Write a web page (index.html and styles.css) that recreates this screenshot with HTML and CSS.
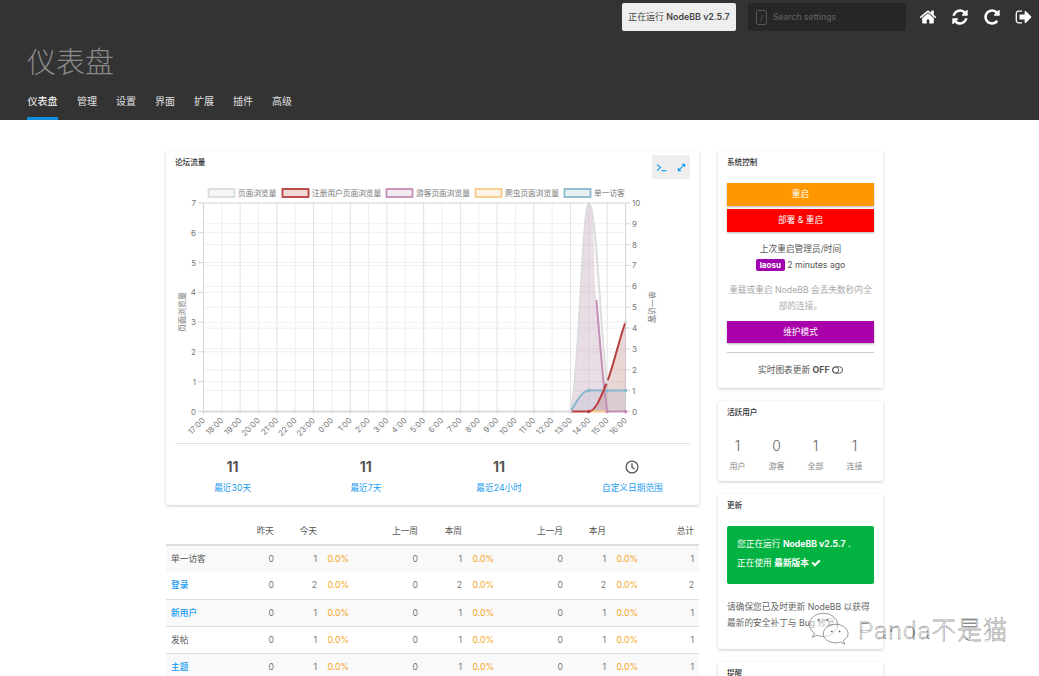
FILE: index.html
```html
<!DOCTYPE html>
<html lang="zh">
<head>
<meta charset="utf-8">
<title>仪表盘</title>
<link rel="stylesheet" href="styles.css">
</head>
<body>
<header class="header">
  <div class="topbar">
    <div class="version">正在运行 <b>NodeBB v2.5.7</b></div>
    <div class="search">
      <span class="key">/</span>
      <span class="search-text">Search settings</span>
    </div>
    <div class="actions">
      <svg class="fa" viewBox="0 0 1792 1792"><path d="M1472 992v480q0 26-19 45t-45 19h-384v-384h-256v384h-384q-26 0-45-19t-19-45v-480q0-1 .5-3t.5-3l575-474 575 474q1 2 1 6zm223-69l-62 74q-8 9-21 11h-3q-13 0-21-7l-692-577-692 577q-12 8-24 7-13-2-21-11l-62-74q-8-10-7-23.5t11-21.5l719-599q32-26 76-26t76 26l244 204v-195q0-14 9-23t23-9h192q14 0 23 9t9 23v408l219 182q10 8 11 21.500t-7 23.500z"/></svg>
      <svg class="fa" viewBox="0 0 1792 1792"><path d="M1639 1056q0 5-1 7-64 268-268 434.500t-478 166.500q-146 0-282.500-55t-243.500-157l-129 129q-19 19-45 19t-45-19-19-45v-448q0-26 19-45t45-19h448q26 0 45 19t19 45-19 45l-137 137q71 66 161 102t187 36q134 0 250-65t186-179q11-17 53-117 8-23 30-23h192q13 0 22.500 9.500t9.500 22.500zm25-800v448q0 26-19 45t-45 19h-448q-26 0-45-19t-19-45 19-45l138-138q-148-137-349-137-134 0-250 65t-186 179q-11 17-53 117-8 23-30 23h-199q-13 0-22.500-9.500t-9.500-22.500v-7q65-268 270-434.500t480-166.500q146 0 284 55.500t245 156.500l130-129q19-19 45-19t45 19 19 45z"/></svg>
      <svg class="fa" viewBox="0 0 1792 1792"><path d="M1664 256v448q0 26-19 45t-45 19h-448q-42 0-59-40-17-39 14-69l138-138q-148-137-349-137-104 0-198.500 40.500t-163.500 109.500-109.500 163.500-40.500 198.500 40.500 198.500 109.500 163.500 163.500 109.500 198.500 40.500q119 0 225-52t179-147q7-10 23-12 15 0 25 9l137 138q9 8 9.500 20.500t-7.500 22.500q-109 132-264 204.500t-327 72.500q-156 0-298-61t-245-164-164-245-61-298 61-298 164-245 245-164 298-61q147 0 284.500 55.500t244.500 156.500l130-129q29-31 70-14 39 17 39 59z"/></svg>
      <svg class="fa" viewBox="0 0 1792 1792"><path d="M704 1440q0 4 1 20t.5 26.500-3 23.500-10 19.500-20.500 6.500h-320q-119 0-203.500-84.500t-84.500-203.500v-704q0-119 84.500-203.500t203.500-84.500h320q13 0 22.500 9.500t9.500 22.500q0 4 1 20t.5 26.500-3 23.500-10 19.500-20.500 6.500h-320q-66 0-113 47t-47 113v704q0 66 47 113t113 47h312l11.500 1 11.500 3 8 5.500 7 9 2 13.500zm928-544q0 26-19 45l-544 544q-19 19-45 19t-45-19-19-45v-288h-448q-26 0-45-19t-19-45v-384q0-26 19-45t45-19h448v-288q0-26 19-45t45-19 45 19l544 544q19 19 19 45z"/></svg>
    </div>
  </div>
  <h1 class="page-title">仪表盘</h1>
  <nav class="nav">
    <a class="nav-item active">仪表盘</a>
    <a class="nav-item">管理</a>
    <a class="nav-item">设置</a>
    <a class="nav-item">界面</a>
    <a class="nav-item">扩展</a>
    <a class="nav-item">插件</a>
    <a class="nav-item">高级</a>
  </nav>
</header>

<main class="main">
  <section class="left">
    <div class="card chart-card">
      <div class="chart-head">
        <div class="card-title chart-title">论坛流量</div>
        <div class="tools">
          <svg class="tool" viewBox="0 0 12 10"><path d="M1 1.500 L5 5 L1 8.500 M6 8.500 H11.500"/></svg>
          <svg class="tool" viewBox="0 0 10 10"><path d="M2 8 L8 2 M5.500 1.500 H8.500 V4.500 M1.500 5.500 V8.500 H4.500"/></svg>
        </div>
      </div>
      <svg class="chart" viewBox="166 179 533 264" width="533" height="264">
        <g class="legend">
          <rect x="208.500" y="189" width="26" height="8" fill="#f6f6f6" stroke="#dcdcdc" stroke-width="1.800"/>
          <text x="238" y="196">页面浏览量</text>
          <rect x="282.500" y="189" width="26" height="8" fill="#f2d9d8" stroke="#b93f3f" stroke-width="1.800"/>
          <text x="312" y="196">注册用户页面浏览量</text>
          <rect x="386.500" y="189" width="26" height="8" fill="#f3ebf2" stroke="#c48fb6" stroke-width="1.800"/>
          <text x="416" y="196">游客页面浏览量</text>
          <rect x="475.500" y="189" width="26" height="8" fill="#fdf3e6" stroke="#f7ca88" stroke-width="1.800"/>
          <text x="505" y="196">爬虫页面浏览量</text>
          <rect x="564.500" y="189" width="26" height="8" fill="#e8f0f4" stroke="#8ab8cc" stroke-width="1.800"/>
          <text x="594" y="196">单一访客</text>
        </g>
        <path class="grid-soft" d="M203.500 381.700H625.500M203.500 351.900H625.500M203.500 322.100H625.500M203.500 292.300H625.500M203.500 262.500H625.500M203.500 232.700H625.500M203.500 369.800H625.500M203.500 348.900H625.500M203.500 328.100H625.500M203.500 307.200H625.500M203.500 286.400H625.500M203.500 265.500H625.500M203.500 244.700H625.500M203.500 223.800H625.500M203.500 390.600H625.500"/>
        <path class="grid-soft" d="M221.800 203V414M258.500 203V414M295.200 203V414M331.900 203V414M368.600 203V414M405.300 203V414M442 203V414M478.700 203V414M515.400 203V414M552.100 203V414M588.800 203V414"/>
        <path class="grid-hard" d="M240.200 203V414M276.900 203V414M313.600 203V414M350.300 203V414M387 203V414M423.700 203V414M460.400 203V414M497.100 203V414M533.800 203V414M570.500 203V414M607.200 203V414"/>
        <path class="axis" d="M198 203H630M198 411.500H630M203.500 203V414M625.500 203V414M198 381.700H203.500M198 351.900H203.500M198 322.100H203.500M198 292.300H203.500M198 262.500H203.500M198 232.700H203.500M625.500 390.600H630M625.500 369.800H630M625.500 348.900H630M625.500 328.100H630M625.500 307.200H630M625.500 286.400H630M625.500 265.500H630M625.500 244.700H630M625.500 223.800H630"/>

        <path class="area-blue" d="M570.500 411.500C577 401 582 391 588.800 390.600C596 389.800 601 390.600 607.200 390.600L625.500 390.600V411.500Z"/>
        <path class="area-purple" d="M570.500 411.500C579 380 582 203 588.800 203C596 203 592 283 596.500 300C599 330 603 385 607.200 411.500H570.500Z"/>
        <path class="area-red" d="M588.800 411.500C595 411.500 600.200 399 607.200 382C614 364 619 340 625.500 322V411.500Z"/>
        <path class="area-gray" d="M570.500 411.500C579 380 582 203 588.800 203C597 203 601 350 607.200 382C614 364 619 340 625.500 322V411.500Z"/>

        <path class="line-gray" d="M203.500 411.500H570.500C579 380 582 203 588.800 203C597 203 601 350 607.200 382C614 364 619 340 625.500 322"/>
        <path class="line-yellow" d="M588.800 411.500H607.200"/>
        <path class="line-blue" d="M570.500 411.500C577 401 582 391 588.800 390.600C596 389.800 601 390.600 607.200 390.600L625.500 390.600"/>
        <path class="line-purple" d="M596.500 300C599 330 603 385 607.200 411.500H625.500"/>
        <path class="line-red" d="M570.500 411.500H588.800C595 411.500 600.200 399 607.200 382C614 364 619 340 625.500 322"/>

        <g class="dots-gray">
          <circle cx="203.500" cy="411.500" r="1.600"/><circle cx="221.800" cy="411.500" r="1.600"/><circle cx="240.200" cy="411.500" r="1.600"/><circle cx="258.500" cy="411.500" r="1.600"/><circle cx="276.900" cy="411.500" r="1.600"/><circle cx="295.200" cy="411.500" r="1.600"/><circle cx="313.600" cy="411.500" r="1.600"/><circle cx="331.900" cy="411.500" r="1.600"/><circle cx="350.300" cy="411.500" r="1.600"/><circle cx="368.600" cy="411.500" r="1.600"/><circle cx="387" cy="411.500" r="1.600"/><circle cx="405.300" cy="411.500" r="1.600"/><circle cx="423.700" cy="411.500" r="1.600"/><circle cx="442" cy="411.500" r="1.600"/><circle cx="460.400" cy="411.500" r="1.600"/><circle cx="478.700" cy="411.500" r="1.600"/><circle cx="497.100" cy="411.500" r="1.600"/><circle cx="515.400" cy="411.500" r="1.600"/><circle cx="533.800" cy="411.500" r="1.600"/><circle cx="552.100" cy="411.500" r="1.600"/><circle cx="570.500" cy="411.500" r="1.600"/><circle cx="588.800" cy="203" r="1.600"/><circle cx="607.200" cy="382" r="2"/><circle cx="625.500" cy="322" r="1.800"/>
        </g>
        <circle cx="588.800" cy="411.500" r="1.800" fill="#b93f3f"/>
        <circle cx="607.200" cy="411.500" r="1.800" fill="#c48fb6"/>
        <circle cx="625.500" cy="411.500" r="1.800" fill="#c48fb6"/>
        <circle cx="588.800" cy="390.600" r="1.800" fill="#8ab8cc"/>
        <circle cx="607.200" cy="390.600" r="1.800" fill="#8ab8cc"/>
        <circle cx="625.500" cy="390.600" r="1.800" fill="#8ab8cc"/>

        <g class="ticks">
          <text x="196" y="206" text-anchor="end">7</text>
          <text x="196" y="236" text-anchor="end">6</text>
          <text x="196" y="266" text-anchor="end">5</text>
          <text x="196" y="295" text-anchor="end">4</text>
          <text x="196" y="325" text-anchor="end">3</text>
          <text x="196" y="355" text-anchor="end">2</text>
          <text x="196" y="385" text-anchor="end">1</text>
          <text x="196" y="415" text-anchor="end">0</text>
          <text x="632" y="206">10</text>
          <text x="632" y="227">9</text>
          <text x="632" y="248">8</text>
          <text x="632" y="268">7</text>
          <text x="632" y="289">6</text>
          <text x="632" y="310">5</text>
          <text x="632" y="331">4</text>
          <text x="632" y="352">3</text>
          <text x="632" y="373">2</text>
          <text x="632" y="394">1</text>
          <text x="632" y="415">0</text>
          <text transform="translate(205.500 421) rotate(-45)" text-anchor="end">17:00</text>
          <text transform="translate(223.800 421) rotate(-45)" text-anchor="end">18:00</text>
          <text transform="translate(242.200 421) rotate(-45)" text-anchor="end">19:00</text>
          <text transform="translate(260.500 421) rotate(-45)" text-anchor="end">20:00</text>
          <text transform="translate(278.900 421) rotate(-45)" text-anchor="end">21:00</text>
          <text transform="translate(297.200 421) rotate(-45)" text-anchor="end">22:00</text>
          <text transform="translate(315.600 421) rotate(-45)" text-anchor="end">23:00</text>
          <text transform="translate(333.900 421) rotate(-45)" text-anchor="end">0:00</text>
          <text transform="translate(352.300 421) rotate(-45)" text-anchor="end">1:00</text>
          <text transform="translate(370.600 421) rotate(-45)" text-anchor="end">2:00</text>
          <text transform="translate(389 421) rotate(-45)" text-anchor="end">3:00</text>
          <text transform="translate(407.300 421) rotate(-45)" text-anchor="end">4:00</text>
          <text transform="translate(425.700 421) rotate(-45)" text-anchor="end">5:00</text>
          <text transform="translate(444 421) rotate(-45)" text-anchor="end">6:00</text>
          <text transform="translate(462.400 421) rotate(-45)" text-anchor="end">7:00</text>
          <text transform="translate(480.700 421) rotate(-45)" text-anchor="end">8:00</text>
          <text transform="translate(499.100 421) rotate(-45)" text-anchor="end">9:00</text>
          <text transform="translate(517.400 421) rotate(-45)" text-anchor="end">10:00</text>
          <text transform="translate(535.800 421) rotate(-45)" text-anchor="end">11:00</text>
          <text transform="translate(554.100 421) rotate(-45)" text-anchor="end">12:00</text>
          <text transform="translate(572.500 421) rotate(-45)" text-anchor="end">13:00</text>
          <text transform="translate(590.800 421) rotate(-45)" text-anchor="end">14:00</text>
          <text transform="translate(609.200 421) rotate(-45)" text-anchor="end">15:00</text>
          <text transform="translate(627.500 421) rotate(-45)" text-anchor="end">16:00</text>
          <text transform="translate(185 312) rotate(-90)" text-anchor="middle">页面浏览量</text>
          <text transform="translate(649 307) rotate(90)" text-anchor="middle">单一访客</text>
        </g>
      </svg>
      <div class="chart-stats">
        <div class="chart-stat"><div class="stat-num">11</div><a class="stat-link">最近30天</a></div>
        <div class="chart-stat"><div class="stat-num">11</div><a class="stat-link">最近7天</a></div>
        <div class="chart-stat"><div class="stat-num">11</div><a class="stat-link">最近24小时</a></div>
        <div class="chart-stat">
          <div class="stat-num"><svg class="clock" viewBox="0 0 14 14"><circle cx="7" cy="7" r="5.900"/><path d="M7 3.200V7.300L9.600 9"/></svg></div>
          <a class="stat-link">自定义日期范围</a>
        </div>
      </div>
    </div>

    <table class="stats-table">
      <colgroup>
        <col class="c-label"><col class="c-39"><col class="c-43"><col class="c-57"><col class="c-44"><col class="c-44"><col class="c-57"><col class="c-44"><col class="c-43"><col class="c-44"><col class="c-44">
      </colgroup>
      <thead>
        <tr><th></th><th>昨天</th><th>今天</th><th></th><th>上一周</th><th>本周</th><th></th><th>上一月</th><th>本月</th><th></th><th>总计</th></tr>
      </thead>
      <tbody>
        <tr class="odd"><td class="label">单一访客</td><td>0</td><td>1</td><td class="pct">0.0%</td><td>0</td><td>1</td><td class="pct">0.0%</td><td>0</td><td>1</td><td class="pct">0.0%</td><td>1</td></tr>
        <tr class="line"><td class="label link">登录</td><td>0</td><td>2</td><td class="pct">0.0%</td><td>0</td><td>2</td><td class="pct">0.0%</td><td>0</td><td>2</td><td class="pct">0.0%</td><td>2</td></tr>
        <tr class="odd line"><td class="label link">新用户</td><td>0</td><td>1</td><td class="pct">0.0%</td><td>0</td><td>1</td><td class="pct">0.0%</td><td>0</td><td>1</td><td class="pct">0.0%</td><td>1</td></tr>
        <tr class="line"><td class="label">发帖</td><td>0</td><td>1</td><td class="pct">0.0%</td><td>0</td><td>1</td><td class="pct">0.0%</td><td>0</td><td>1</td><td class="pct">0.0%</td><td>1</td></tr>
        <tr class="odd"><td class="label link">主题</td><td>0</td><td>1</td><td class="pct">0.0%</td><td>0</td><td>1</td><td class="pct">0.0%</td><td>0</td><td>1</td><td class="pct">0.0%</td><td>1</td></tr>
      </tbody>
    </table>
  </section>

  <aside class="right">
    <div class="card side-card control">
      <div class="card-title side-title">系统控制</div>
      <a class="btn btn-orange">重启</a>
      <a class="btn btn-red">部署 &amp; 重启</a>
      <div class="center-text first-line">上次重启管理员/时间</div>
      <div class="center-text"><span class="user-badge">laosu</span> 2 minutes ago</div>
      <p class="muted">重载或重启 NodeBB 会丢失数秒内全部的连接。</p>
      <a class="btn btn-purple">维护模式</a>
      <div class="rule"></div>
      <div class="center-text live">实时图表更新 <b>OFF</b> <svg class="toggle" viewBox="0 0 12 8"><rect x=".5" y=".5" width="11" height="7" rx="3.500"/><circle cx="4" cy="4" r="3.300"/></svg></div>
    </div>

    <div class="card side-card active-users">
      <div class="card-title side-title">活跃用户</div>
      <div class="user-grid">
        <div><div class="big">1</div><div class="small">用户</div></div>
        <div><div class="big">0</div><div class="small">游客</div></div>
        <div><div class="big">1</div><div class="small">全部</div></div>
        <div><div class="big">1</div><div class="small">连接</div></div>
      </div>
    </div>

    <div class="card side-card updates">
      <div class="card-title side-title">更新</div>
      <div class="green-box">
        <div>您正在运行 <b>NodeBB v2.5.7</b> .</div>
        <div>正在使用 <b>最新版本</b> <svg class="check" viewBox="0 0 1792 1792"><path d="M1671 566q0 40-28 68l-724 724-136 136q-28 28-68 28t-68-28l-136-136-362-362q-28-28-28-68t28-68l136-136q28-28 68-28t68 28l294 295 656-657q28-28 68-28t68 28l136 136q28 28 28 68z"/></svg></div>
      </div>
      <p class="update-note">请确保您已及时更新 NodeBB 以获得最新的安全补丁与 Bug 修复。</p>
    </div>

    <div class="card side-card">
      <div class="card-title side-title">提醒</div>
    </div>
  </aside>
</main>

<div class="watermark">
  <svg class="wechat" viewBox="0 0 44 36">
    <path d="M16 1C8 1 1.500 6 1.500 13C1.500 17 4 20 7 22L4.500 26L10 24C12 25 14 25.300 16 25.300C24 25.300 31 19.500 31 13C31 6 24 1 16 1Z"/>
    <path d="M29 12.500C22 12.500 16 17 16 22.500C16 28 22 32 29 32C31 32 32.500 31.700 34 31L38.500 33.500L37 29.500C40 27.500 42 25.500 42 22.500C42 17 36 12.500 29 12.500Z"/>
    <circle class="eye" cx="11" cy="8" r="1.100"/><circle class="eye" cx="20" cy="8" r="1.100"/><circle class="eye" cx="25" cy="20" r="1"/><circle class="eye" cx="33" cy="20" r="1"/>
  </svg>
  <span class="wm-text">Panda不是猫</span>
</div>
</body>
</html>
```
FILE: styles.css
```css
* { box-sizing: border-box; }
html, body { margin: 0; padding: 0; }
body {
  width: 1039px;
  height: 676px;
  overflow: hidden;
  position: relative;
  background: #fff;
  color: #555;
  font-family: Inter, "Noto Sans CJK SC", sans-serif;
  font-size: 8.7px;
  line-height: 16px;
}

/* header */
.header {
  height: 120px;
  background: #333;
  display: flex;
  flex-direction: column;
  padding: 3px 6px 0 27px;
}
.topbar { display: flex; justify-content: flex-end; align-items: stretch; height: 28px; }
.version {
  width: 114px;
  background: #eee;
  border-radius: 2px;
  color: #444;
  font-size: 8.9px;
  line-height: 28px;
  text-align: center;
  white-space: nowrap;
}
.version b { font-weight: 600; }
.search {
  width: 158px;
  margin-left: 12px;
  background: #262626;
  border-radius: 2px;
  display: flex;
  align-items: center;
  padding-left: 8px;
}
.key {
  width: 11px;
  height: 15px;
  border: 1px solid #555;
  border-radius: 2px;
  color: #666;
  font-size: 7px;
  line-height: 13px;
  text-align: center;
}
.search-text { margin-left: 6px; color: #5e5e5e; font-size: 8.5px; font-weight: 500; }
.actions { display: flex; align-items: center; gap: 14px; margin-left: 13px; }
.fa { width: 18px; height: 18px; fill: #fff; display: block; }
.page-title {
  margin: 17px 0 0;
  color: #8a8a8a;
  font-size: 29px;
  font-weight: 300;
  line-height: 30px;
}
.nav { margin-top: auto; display: flex; gap: 19px; }
.nav-item {
  color: #e0e0e0;
  font-size: 10px;
  line-height: 12px;
  padding: 4px 0 10px;
  border-bottom: 3px solid transparent;
}
.nav-item.active { width: 31px; text-align: center; color: #fff; border-bottom-color: #0d8fdf; }

/* layout */
.main { display: flex; gap: 19px; padding: 31px 0 0 166px; }
.left { width: 533px; flex: none; }
.right { width: 165px; flex: none; display: flex; flex-direction: column; gap: 13px; }
.card {
  background: #fff;
  border-radius: 2px;
  box-shadow: 0 1px 3px rgba(0, 0, 0, .22);
}
.card-title { color: #333; font-size: 7.6px; font-weight: 500; line-height: 14px; }
.chart-title { margin-top: 1px; }

/* chart card */
.chart-head { display: flex; justify-content: space-between; align-items: flex-start; height: 28px; padding: 4px 9px 0; }
.tools {
  width: 38px;
  height: 24px;
  background: #eee;
  display: flex;
  align-items: center;
  justify-content: center;
  gap: 9px;
}
.tool { width: 11px; height: 9px; fill: none; stroke: #1a9cf0; stroke-width: 1.300; }
.chart { display: block; }
.legend text, .ticks text { font-size: 7.7px; fill: #777; }
.ticks text { font-size: 8px; }
.grid-soft { fill: none; stroke: #efefef; stroke-width: 1; }
.grid-hard { fill: none; stroke: #e2e2e2; stroke-width: 1; }
.axis { fill: none; stroke: #d4d4d4; stroke-width: 1; }
.area-gray { fill: rgba(200, 200, 200, .1); }
.area-purple { fill: rgba(186, 139, 175, .28); }
.area-red { fill: rgba(171, 70, 66, .2); }
.area-blue { fill: rgba(124, 175, 194, .16); }
.line-gray { fill: none; stroke: #dcdcdc; stroke-width: 1.800; }
.line-red { fill: none; stroke: #b93f3f; stroke-width: 2; }
.line-purple { fill: none; stroke: #c48fb6; stroke-width: 2; }
.line-yellow { fill: none; stroke: #f7ca88; stroke-width: 2; }
.line-blue { fill: none; stroke: #8ab8cc; stroke-width: 2; }
.dots-gray circle { fill: #dcdcdc; }
.chart-stats {
  display: grid;
  grid-template-columns: repeat(4, 1fr);
  padding: 15px 0 0;
  position: relative;
  height: 62px;
}
.chart-stats::before {
  content: "";
  position: absolute;
  left: 9px;
  right: 9px;
  top: 0;
  border-top: 1px solid #e2e2e2;
}
.chart-stat { text-align: center; }
.stat-num { color: #555; font-size: 14px; font-weight: 700; line-height: 18px; height: 18px; display: flex; justify-content: center; align-items: center; }
.stat-link { display: block; margin-top: 6px; color: #1a9cf0; font-size: 8.7px; line-height: 12px; }
.clock { width: 14px; height: 14px; fill: none; stroke: #555; stroke-width: 1.300; }

/* table */
.stats-table {
  width: 533px;
  margin-top: 10px;
  border-collapse: collapse;
  table-layout: fixed;
  color: #777;
  font-size: 8.7px;
}
.c-label { width: 74px; }
.c-39 { width: 39px; }
.c-43 { width: 43px; }
.c-44 { width: 44px; }
.c-57 { width: 57px; }
.stats-table th {
  height: 30px;
  padding: 2px 5px 0;
  border-bottom: 2px solid #ddd;
  color: #555;
  font-weight: 400;
  text-align: right;
}
.stats-table td { height: 27px; padding: 0 5px; text-align: right; }
.stats-table .odd { background: #f9f9f9; }
.stats-table .line td { border-bottom: 1px solid #ddd; }
.stats-table .label { color: #555; text-align: left; white-space: nowrap; }
.stats-table .link { color: #1a9cf0; font-weight: 500; }
.stats-table .pct { color: #f6a623; text-align: left; padding-left: 5.500px; }

/* side cards */
.side-card { padding: 0 9px; }
.side-title { padding-top: 4.500px; height: 19px; line-height: 14px; }
.btn {
  display: block;
  color: #fff;
  text-align: center;
  line-height: 23px;
  height: 23px;
  box-shadow: 0 1px 2px rgba(0, 0, 0, .3);
}
.btn-orange { background: #ff9800; margin-top: 13px; }
.btn-red { background: #ff0000; margin-top: 3px; }
.btn-purple { background: #aa00aa; height: 22px; line-height: 22px; margin-top: 7px; }
.center-text { text-align: center; white-space: nowrap; color: #555; }
.first-line { margin-top: 9px; }
.user-badge {
  display: inline-block;
  background: #a100b0;
  color: #fff;
  font-size: 8px;
  font-weight: 700;
  line-height: 12px;
  padding: 0 4px;
  border-radius: 2px;
}
.muted { margin: 9px 0 0; color: #aaa; text-align: center; }
.rule { margin-top: 9px; border-top: 1px solid #ccc; }
.live { margin-top: 9px; padding-bottom: 10px; }
.toggle { width: 11px; height: 8px; fill: none; stroke: #555; stroke-width: 1; vertical-align: -1px; }
.user-grid {
  display: grid;
  grid-template-columns: repeat(4, 39px);
  margin: 17px 0 0 -9px;
  padding-bottom: 9px;
  text-align: center;
}
.big { color: #666; font-size: 14px; font-weight: 300; line-height: 18px; }
.small { margin-top: 5px; color: #888; font-size: 8px; line-height: 12px; }
.green-box {
  margin-top: 13px;
  height: 58px;
  padding: 9px 10px;
  background: #03b342;
  border-radius: 2px;
  color: #fff;
  line-height: 19px;
  white-space: nowrap;
}
.check { width: 10px; height: 10px; fill: #fff; vertical-align: -1.500px; }
.update-note { margin: 15px 0 0; padding-bottom: 18px; color: #666; }

/* watermark overlay */
.watermark {
  position: absolute;
  left: 808px;
  top: 612px;
  display: flex;
  align-items: center;
  gap: 8px;
}
.wechat { width: 42px; height: 35px; fill: rgba(255, 255, 255, .55); stroke: #666; stroke-width: .7; }
.eye { fill: #666; stroke: none; }
.wm-text {
  margin-top: 3px;
  color: #fff;
  font-family: Roboto, "Noto Sans CJK SC", sans-serif;
  font-size: 24.6px;
  font-weight: 300;
  letter-spacing: 1px;
  line-height: 30px;
  white-space: nowrap;
  -webkit-text-stroke: .3px #333;
}
```
